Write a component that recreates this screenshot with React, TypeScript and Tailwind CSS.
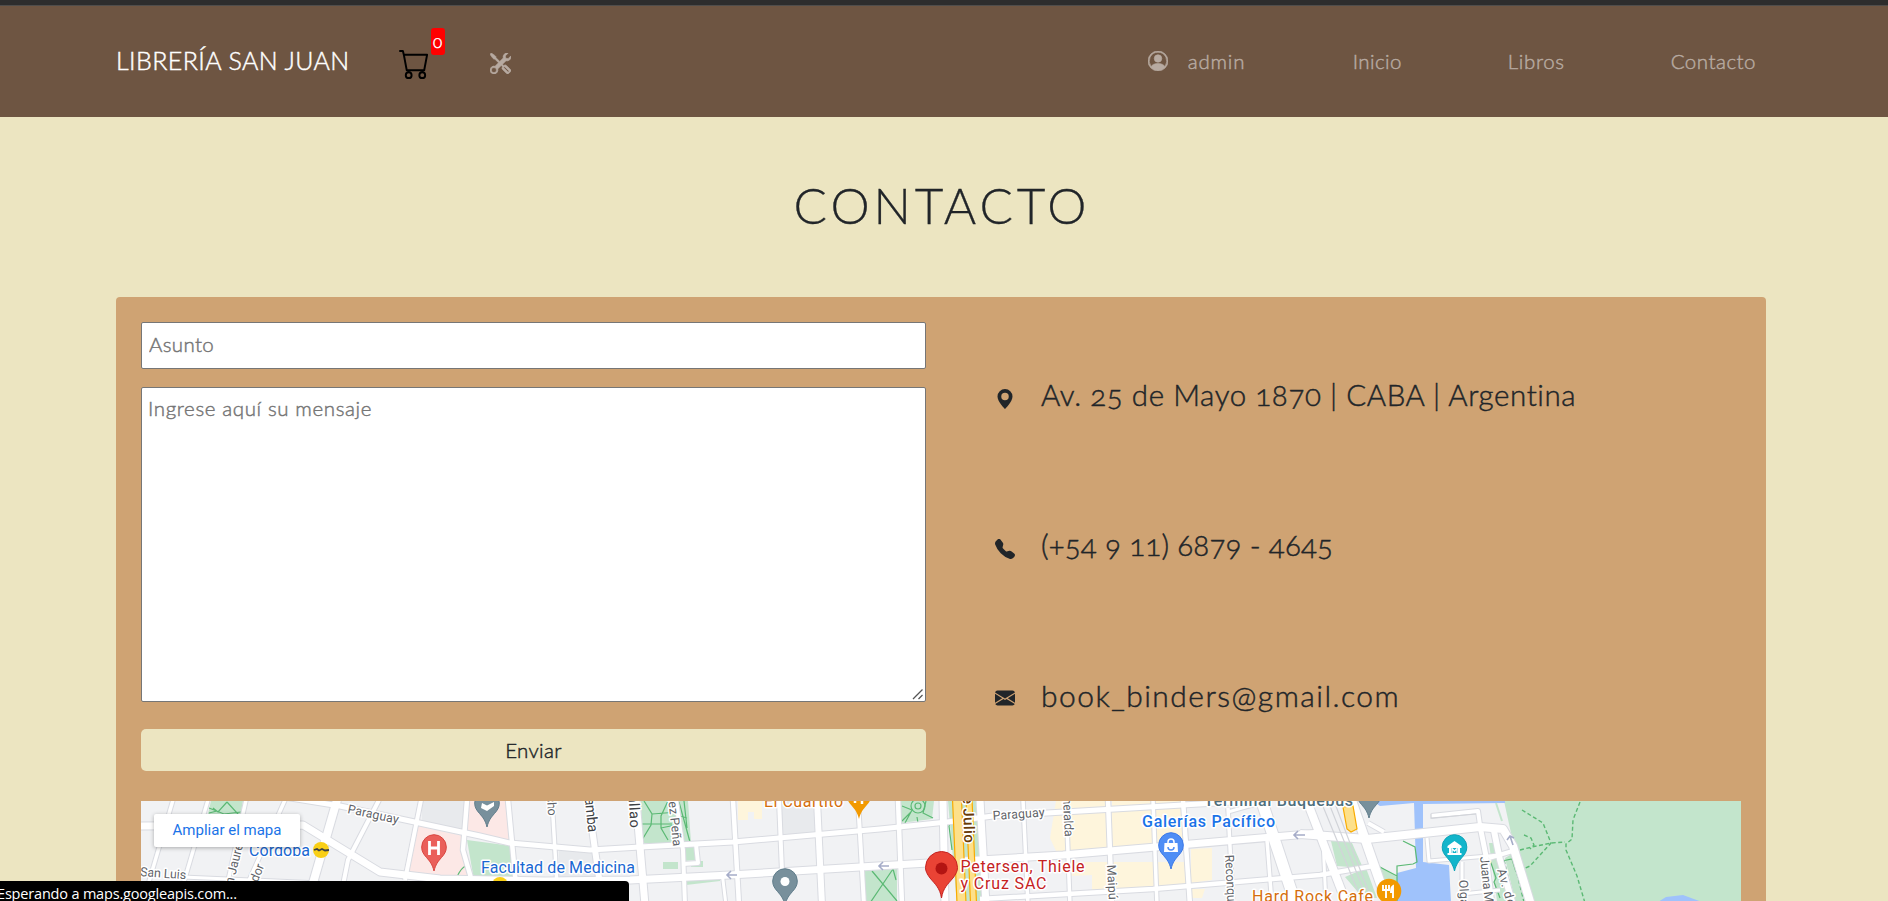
import {
  BsCart,
  BsEnvelopeFill,
  BsGeoAltFill,
  BsPersonCircle,
  BsTelephoneFill,
  BsTools,
} from "react-icons/bs";

const roads: [string, number][] = [
  ["141,826 303,825 380,872 440,879 545,881 630,880 730,875 860,867 1063,855 1320,833", 7],
  ["278,796 340,806 480,836 510,843 590,850 640,847 733,842 880,829 947,822 993,816 1047,813 1250,801", 5],
  ["980,899 1153,889 1320,875 1373,866", 4.5],
  ["183,877 320,883", 3],
  ["173,800 148,885", 3.5],
  ["208,800 183,885", 3.5],
  ["246,800 226,890", 3.5],
  ["285,800 247,885", 3.5],
  ["337,800 311,890", 8],
  ["379,800 348,860 342,890", 4],
  ["421,800 405,880", 4],
  ["467,800 463,850 473,885", 4.5],
  ["508,800 516,885", 4.5],
  ["552,800 557,885", 3.5],
  ["588,800 600,885", 6],
  ["636,800 645,905", 7],
  ["676,800 683,850 685,905", 4],
  ["722,872 726,905", 3],
  ["696,844 698,863 683,864", 4],
  ["733,800 739,905", 4.5],
  ["779,800 782,872", 4],
  ["817,800 822,905", 6],
  ["858,800 864,905", 4],
  ["898,800 902,905", 4.5],
  ["943,800 945,905", 7],
  ["980,800 986,905", 7],
  ["1023,800 1028,905", 3.5],
  ["1066,800 1070,905", 3.5],
  ["1108,800 1112,905", 4.5],
  ["1153,800 1157,905", 3.5],
  ["1183,800 1190,905", 4.5],
  ["1228,808 1233,905", 3.5],
  ["1228,812 1256,804", 3],
  ["1267,840 1272,905", 3.5],
  ["1260,796 1296,905", 11],
  ["1323,840 1326,905", 3],
  ["1305,796 1347,905", 8],
  ["1350,796 1388,905", 9],
  ["1368,823 1384,832", 4],
  ["1431,816 1478,811 1480,825", 4],
  ["1427,838 1429,861 1500,855", 3],
  ["1462,862 1462,905", 3],
  ["1462,894 1500,890", 3],
  ["1480,826 1486,856 1492,905", 5],
  ["1493,826 1500,860 1513,905", 6],
  ["1300,834 1367,839 1480,827 1503,829 1513,846 1531,905", 8],
  ["1489,858 1516,850", 4],
];

function Roads() {
  return (
    <g fill="none" strokeLinejoin="round">
      {roads.map(([p, w]) => (
        <polyline key={p} points={p} stroke="#d9dbe1" strokeWidth={w + 2} />
      ))}
      {roads.map(([p, w]) => (
        <polyline key={p} points={p} stroke="#ffffff" strokeWidth={w} />
      ))}
    </g>
  );
}

function Pin({ x, y, color, edge = "#ffffff00" }: { x: number; y: number; color: string; edge?: string }) {
  return (
    <path
      transform={`translate(${x} ${y})`}
      d="M0 0C-1.6-6.5-4-9.5-7.5-13.5C-10.5-17-12.3-19.500-12.300-24A12.300 12.300 0 0 1 12.300-24C12.300-19.500 10.500-17 7.500-13.500C4-9.500 1.600-6.500 0 0Z"
      fill={color}
      stroke={edge}
    />
  );
}

type LabelProps = {
  x: number;
  y: number;
  len: number;
  size?: number;
  color?: string;
  rotate?: number;
  weight?: number;
  children: string;
};

function Label({ x, y, len, size = 16, color = "#5f6368", rotate = 0, weight = 400, children }: LabelProps) {
  return (
    <text
      x={x}
      y={y}
      textLength={len}
      fontSize={size}
      fontWeight={weight}
      fill={color}
      stroke="#ffffff"
      strokeWidth={3}
      strokeLinejoin="round"
      paintOrder="stroke"
      transform={`rotate(${rotate} ${x} ${y})`}
    >
      {children}
    </text>
  );
}

function CityMap() {
  return (
    <svg viewBox="141 801 1600 100" width={1600} height={100} className="block font-[Roboto,sans-serif]">
      <rect x="141" y="801" width="1600" height="100" fill="#f1f2f4" />
      <g fill="#e8eaed">
        <path d="M422 801H465V833L422 824Z" />
        <path d="M559 851H595L598 880H558Z" />
        <path d="M781 801H817V832L782 836Z" />
      </g>
      <g fill="#fce8e6">
        <path d="M418 826L463 836V850L472 880L408 874Z" />
        <path d="M469 801H508L513 842L466 832Z" />
      </g>
      <g fill="#fef5dc">
        <path d="M1056 801H1107L1109 853L1056 851L1050 838Z" />
        <path d="M1112 801H1183L1186 845L1112 852Z" />
        <path d="M1070 862H1185L1188 888L1112 894L1092 894V875L1070 876Z" />
        <path d="M1191 849L1212 848V880L1191 883Z" />
        <path d="M1192 889H1205L1202 898H1192Z" />
        <path d="M738 801H762V819H754V812H748V820H738Z" />
      </g>
      <g fill="#c3e5cc">
        <path d="M211 801H243L240 818H207Z" />
        <path d="M467 840L512 846L515 880H474Z" />
        <path d="M641 801H676L681 845L642 843Z" />
        <path d="M679 801H688L691 842L682 842Z" />
        <path d="M683 846H695V860L684 861Z" />
        <path d="M663 862H678V869H663ZM691 861H703V867H691Z" />
        <path d="M686 881L720 878V881L686 885Z" />
        <path d="M901 801H934L932 819L901 823Z" />
        <path d="M862 871L897 869V905H865Z" />
        <path d="M948 801H982L988 905H957Z" />
        <path d="M1330 837L1352 843L1363 868L1337 866Z" />
        <path d="M1345 877L1366 868L1377 898H1363Z" />
        <path d="M1379 866L1397 877V901H1387Z" />
        <path d="M1489 843H1494L1513 901H1497Z" />
        <path d="M1505 858L1515 852L1526 905H1516Z" />
        <path d="M1504 801H1742V902H1533L1517 850L1511 833Z" />
      </g>
      <g fill="#9fc2fb">
        <path d="M1372 801H1505V803L1423 804V862L1449 865L1451 902H1397V873L1416 868L1414 803L1380 806Z" />
        <path d="M1658 902L1666 897L1683 895L1702 902Z" />
      </g>
      <g fill="none" stroke="#5bb974" strokeWidth="1.2">
        <path d="M209 808L224 814L241 812M209 813L217 811M227 802L238 814L235 818M227 802L218 812L213 808" />
        <path d="M457 877C460 870 463 867 466 866" />
        <path d="M642 824H672M644 801L652 814L651 825L642 840M668 801L661 816V828L668 840M652 814L678 812M661 828L680 824" />
        <path d="M679 802L690 842M684 801L687 828M680 816L687 818" />
        <path d="M902 806L912 810L905 823M926 801L923 813L933 818M917 817L918 823M902 821L911 812" />
        <circle cx="918" cy="806" r="7" />
        <circle cx="918" cy="806" r="3" />
        <path d="M872 871L897 901M893 869L870 903M893 869L896 880" />
        <path d="M952 819L949 826L952 850" />
        <path d="M1403 841L1415 847L1417 862L1413 864L1397 866V901M1378 866L1397 876M1378 866L1389 895" />
        <path d="M1490 860L1496 878L1494 882L1500 898M1502 861L1512 859L1516 872" />
      </g>
      <g fill="none" stroke="#5bb974" strokeWidth="1.4" strokeDasharray="4 2.500">
        <path d="M1522 810L1543 823L1551 843L1530 866L1523 869" />
        <path d="M1580 802L1573 820L1572 839L1566 844L1566 850L1577 876L1585 903" />
        <path d="M1520 850L1532 847L1551 843L1565 842" />
        <path d="M1524 835L1531 838L1534 845L1530 849" />
        <path d="M1504 860L1514 902M1514 861L1524 902" />
      </g>
      <Roads />
      <g stroke="#d2d4d9" fill="none" strokeWidth="1.2">
        <path d="M1328 801L1368 901M1334 801L1372 901M1322 804L1362 901" />
        <path d="M1431 814V818L1476 814" />
      </g>
      <path d="M1496 803L1502 821" stroke="#c3e5cc" strokeWidth="2" />
      <g fill="#fde08a" stroke="#f9ab00" strokeWidth="1.200">
        <path d="M952.500 799H961.500L966 903H957Z" />
        <path d="M966 799H972L976.500 903H970.500Z" />
        <path d="M1343 807L1353 806L1357 829L1351 832L1347 829Z" />
      </g>
      <g fill="none" stroke="#a5acc8" strokeWidth="1.600">
        <path d="M737 875H727M731 871L727 875L731 879" />
        <path d="M889 866H879M883 862L879 866L883 870" />
        <path d="M1305 835H1294M1298 831L1294 835L1298 839" />
        <path d="M1513 845L1510 836M1507 840L1510 836L1514 838" />
      </g>

      <Label x={347} y={813} len={52} size={12.5} rotate={12}>Paraguay</Label>
      <Label x={140} y={876} len={46} size={12.5} rotate={4}>San Luis</Label>
      <Label x={233} y={885} len={48} size={12.500} rotate={-76}>n Jaures</Label>
      <Label x={255} y={889} len={25} size={12.500} rotate={-68}>ador</Label>
      <Label x={249} y={856} len={61} color="#1967d2">Córdoba</Label>
      <Label x={481} y={872.500} len={154} color="#1967d2">Facultad de Medicina</Label>
      <Label x={546} y={784} len={32} size={12.500} rotate={86}>ancho</Label>
      <Label x={582} y={772} len={61} size={14.500} rotate={84} color="#3c4043">Riobamba</Label>
      <Label x={628} y={785} len={43} size={14.500} rotate={87} color="#3c4043">Callao</Label>
      <Label x={664} y={758} len={89} size={12.500} rotate={84}>Rodríguez Peña</Label>
      <Label x={764} y={807} len={79} color="#d56e0c">El Cuartito</Label>
      <Label x={962} y={774} len={69} size={15} weight={500} rotate={88} color="#6b3b06">9 de Julio</Label>
      <Label x={993} y={820} len={52} size={12.500} rotate={-4}>Paraguay</Label>
      <Label x={1062} y={781} len={56} size={12.500} rotate={87}>Esmeralda</Label>
      <Label x={1107} y={865} len={35} size={12.500} rotate={87}>Maipú</Label>
      <Label x={1225} y={855} len={66} size={12.500} rotate={87}>Reconquista</Label>
      <Label x={1142} y={827} len={133} weight={500} color="#1a73e8">Galerías Pacífico</Label>
      <Label x={1204} y={805.500} len={149} weight={500} color="#4f6f7c">Terminal Buquebus</Label>
      <Label x={1252} y={902} len={121} color="#d56e0c">Hard Rock Cafe</Label>
      <Label x={1459} y={880} len={26} size={12.500} rotate={87}>Olga</Label>
      <Label x={1480} y={857} len={72} size={12.500} rotate={84}>Juana Manso</Label>
      <Label x={1497} y={870} len={38} size={12.500} rotate={74}>Av. de</Label>

      <circle cx="321" cy="850" r="8" fill="#f9cf16" />
      <path d="M314 850L317 849L319 850.500L322 849L325 850.500L329 850" fill="none" stroke="#3c4043" strokeWidth="1.800" />
      <circle cx="500" cy="885" r="8" fill="#f9cf16" />

      <Pin x={434} y={871} color="#ea5f5a" edge="#d9453f" />
      <path d="M429.500 841V855M438.500 841V855M429.500 848H438.500" stroke="#fff" strokeWidth="2.800" />
      <Pin x={487} y={827} color="#78909c" edge="#607d8b" />
      <path d="M482 803L487 805.500L494 802V806L487 811L481 808Z" fill="#fff" />
      <Pin x={859} y={819} color="#f29900" />
      <path d="M855 799V803M862 799V804" stroke="#fff" strokeWidth="2.500" />
      <Pin x={785} y={905} color="#78909c" edge="#607d8b" />
      <circle cx="785" cy="881.500" r="4.500" fill="#fff" />
      <Pin x={1171} y={869} color="#4f8ef5" edge="#3b78e7" />
      <path d="M1164.500 843H1177.500L1178 852H1164Z" fill="#fff" />
      <path d="M1168 845V842A3 3 0 0 1 1174 842V845" fill="none" stroke="#fff" strokeWidth="1.500" />
      <path d="M1168 847A3 3 0 0 0 1174 847" fill="none" stroke="#4f8ef5" strokeWidth="1.500" />
      <Pin x={1369} y={818} color="#78909c" edge="#607d8b" />
      <Pin x={1454.500} y={871} color="#12b5cb" edge="#0da3b7" />
      <path d="M1447.500 846L1454.500 841L1461.500 846V848H1447.500ZM1449 848H1451V853H1449ZM1458 848H1460V853H1458ZM1447.500 853H1461.500V855H1447.500Z" fill="#fff" />
      <path d="M1452 853V848.500L1454.500 851L1457 848.500V853" fill="none" stroke="#fff" strokeWidth="1.300" />
      <circle cx="1389" cy="891" r="12.300" fill="#f29900" />
      <path d="M1383 885V890H1389V885M1386 885V898M1393 898V886C1391 887 1391 890 1391 892H1393" fill="none" stroke="#fff" strokeWidth="1.900" />

      <path
        d="M941.500 898C940 888 935 884 930 878C927 874 925.500 871 925.500 867.500A16 16 0 0 1 957.500 867.500C957.500 871 956 874 953 878C948 884 943 888 941.500 898Z"
        fill="#ea4335"
        stroke="#c5221f"
      />
      <circle cx="941.500" cy="868.500" r="6" fill="#b31412" />
      <Label x={960.500} y={872} len={124} color="#c5221f">Petersen, Thiele</Label>
      <Label x={960.500} y={889} len={86} color="#c5221f">y Cruz SAC</Label>
    </svg>
  );
}

export default function App() {
  return (
    <div className="relative h-[901px] w-full overflow-hidden bg-[#ece5c1] font-[Lato,sans-serif] font-light text-[#212529] [font-variant-ligatures:none] [-webkit-text-stroke:0.45px]">
      <div className="h-1.5 border-b border-[#4f4d4b] bg-[#2d2d2d]" />
      <header className="flex h-[111px] items-center bg-[#6e5542] pl-[116px] pr-[132px]">
        <a className="-mt-1 text-[25px] leading-8 tracking-[0.42px] text-white">LIBRERÍA SAN JUAN</a>
        <div className="relative ml-[49px] mt-1">
          <BsCart className="size-[31px] text-black" />
          <span className="absolute -top-5 left-8 flex h-[27px] w-3.5 items-center justify-center rounded-[3px] bg-[#ff0000] text-[17px] leading-none text-white oldstyle-nums">
            0
          </span>
        </div>
        <BsTools className="ml-[60px] mt-1 size-[21px] stroke-[0.5] text-[#b7aaa1]" />
        <nav className="-mt-0.5 ml-auto flex items-center text-[20.5px] leading-7 text-[#b7aaa1]">
          <BsPersonCircle className="mr-5 mt-px size-5 stroke-[0.5]" />
          <a className="w-[165px] tracking-[0.8px]">admin</a>
          <a className="w-[155px] tracking-[0.4px]">Inicio</a>
          <a className="w-[163px] tracking-[0.65px]">Libros</a>
          <a className="tracking-[0.5px]">Contacto</a>
        </nav>
      </header>

      <main className="px-[116px]">
        <h1 className="h-[180px] pl-1 pr-2 pt-14 text-center text-[49.5px] leading-[64px] tracking-[3.9px] [-webkit-text-stroke:0.3px]">
          CONTACTO
        </h1>
        <section className="mr-1.5 h-[640px] rounded bg-[#cfa373] px-[25px] pt-[25px]">
          <div className="flex h-[479px]">
            <form className="flex w-[785px] flex-col">
              <input
                placeholder="Asunto"
                className="h-[47px] rounded-[2px] border border-[#767676] bg-white px-[7px] pb-1 text-[20.5px] tracking-[0.35px] placeholder:text-[#757575] placeholder:opacity-100"
              />
              <div className="relative mt-[18px] h-[315px]">
                <textarea
                  placeholder="Ingrese aquí su mensaje"
                  className="block size-full resize-none rounded-[2px] border border-[#767676] bg-white px-1.5 py-[5px] text-[20.5px] leading-[30px] tracking-[0.62px] placeholder:text-[#757575]"
                />
                <svg viewBox="0 0 12 12" className="absolute bottom-0.5 right-0.5 size-3" stroke="#555555" strokeWidth="1.3">
                  <path d="M1 11L10.500 1.500M6.500 11L10.500 7" />
                </svg>
              </div>
              <button
                type="button"
                className="mt-[27px] h-[42px] rounded-[5px] bg-[#ece5c1] text-[20.5px] leading-none tracking-[0.35px]"
              >
                Enviar
              </button>
            </form>
            <address className="ml-[69px] flex flex-col gap-[106px] pt-[51px] text-[29.5px] leading-[44px] not-italic oldstyle-nums">
              <div className="flex h-11 items-center gap-[26px]">
                <BsGeoAltFill className="mt-2 size-5" />
                <span className="tracking-[0.58px]">Av. 25 de Mayo 1870 | CABA | Argentina</span>
              </div>
              <div className="flex h-11 items-center gap-[26px]">
                <BsTelephoneFill className="mt-[7px] size-5" />
                <span className="tracking-[0.13px]">(+54 9 11) 6879 - 4645</span>
              </div>
              <div className="flex h-11 items-center gap-[26px]">
                <BsEnvelopeFill className="mt-1.5 size-5" />
                <span className="text-[30px] tracking-[1.47px]">book_binders@gmail.com</span>
              </div>
            </address>
          </div>
          <div className="relative h-[100px] w-[1600px] [-webkit-text-stroke:0]">
            <CityMap />
            <a className="absolute left-[13px] top-[13px] flex h-[33px] w-[146px] items-center justify-center rounded-[2px] bg-white pb-px font-[Roboto,sans-serif] text-[15px] font-normal text-[#1a73e8] shadow-[0_1px_4px_rgba(0,0,0,0.3)]">
              Ampliar el mapa
            </a>
          </div>
        </section>
      </main>

      <div className="absolute bottom-0 left-0 h-5 w-[629px] overflow-hidden whitespace-nowrap rounded-tr bg-black text-white [-webkit-text-stroke:0]">
        <span className="-ml-[3px] block pt-[3px] font-['Open_Sans',sans-serif] text-[14.5px] font-normal leading-5 tracking-[-0.18px]">
          Esperando a maps.googleapis.com...
        </span>
      </div>
    </div>
  );
}
